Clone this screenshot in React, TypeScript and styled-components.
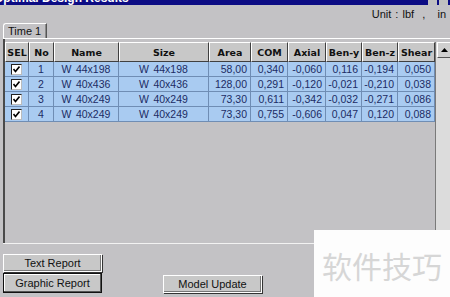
import { styled, createGlobalStyle } from "styled-components";

const GlobalStyle = createGlobalStyle`
  html, body {
    margin: 0;
    padding: 0;
    background: #c3c2c5;
  }
  body {
    font-family: "Liberation Sans", Arial, sans-serif;
    overflow: hidden;
  }
`;

interface IRow {
  no: number;
  name: string;
  size: string;
  area: string;
  com: string;
  axial: string;
  beny: string;
  benz: string;
  shear: string;
}

const rows: IRow[] = [
  { no: 1, name: "W 44x198", size: "W 44x198", area: "58,00", com: "0,340", axial: "-0,060", beny: "0,116", benz: "-0,194", shear: "0,050" },
  { no: 2, name: "W 40x436", size: "W 40x436", area: "128,00", com: "0,291", axial: "-0,120", beny: "-0,021", benz: "-0,210", shear: "0,038" },
  { no: 3, name: "W 40x249", size: "W 40x249", area: "73,30", com: "0,611", axial: "-0,342", beny: "-0,032", benz: "-0,271", shear: "0,086" },
  { no: 4, name: "W 40x249", size: "W 40x249", area: "73,30", com: "0,755", axial: "-0,606", beny: "0,047", benz: "0,120", shear: "0,088" },
];

const columns = "24px 25px 65px 90px 42px 37px 38px 36px 36px 37px";

const Window = styled.div`
  width: 450px;
  height: 297px;
  display: flex;
  flex-direction: column;
  position: relative;
  overflow: hidden;
`;

const TitleBar = styled.div`
  height: 5px;
  background: #0c0c84;
  overflow: hidden;
  display: flex;
  justify-content: space-between;
`;

const TitleText = styled.span`
  color: #fff;
  font-weight: bold;
  font-size: 12px;
  line-height: 12px;
  margin-top: -8px;
  margin-left: -6px;
`;

const TitleButtons = styled.div`
  display: flex;
  gap: 2px;
  padding-right: 2px;
`;

const TitleButton = styled.div`
  width: 9px;
  background: #c0c0c0;
`;

const UnitBar = styled.div`
  height: 17px;
  display: flex;
  align-items: center;
  justify-content: flex-end;
  padding-right: 4px;
  font-size: 11px;
  color: #111;
  word-spacing: 1px;
`;

const TabStrip = styled.div`
  height: 16px;
  padding-left: 3px;
  display: flex;
  align-items: flex-end;
`;

const Tab = styled.div`
  width: 44px;
  height: 15px;
  border: 1px solid #fff;
  border-bottom: none;
  border-right-color: #555;
  border-top-left-radius: 3px;
  box-shadow: inset -1px 0 0 #8a8a8a;
  font-size: 11px;
  line-height: 15px;
  padding-left: 4px;
  color: #111;
  box-sizing: border-box;
`;

const Panel = styled.div`
  height: 206px;
  margin-left: 3px;
  border-top: 1px solid #fff;
  border-bottom: 1px solid #f2f2f2;
  display: flex;
  box-sizing: border-box;
`;

const GridFrame = styled.div`
  flex: 1;
  display: flex;
  border-left: 2px solid #4a4a4a;
  padding-top: 3px;
`;

const Grid = styled.div`
  width: 430px;
  display: flex;
  flex-direction: column;
`;

const HeaderRow = styled.div`
  display: grid;
  grid-template-columns: ${columns};
  height: 20px;
`;

const HeaderCell = styled.div`
  background: #c8c8c8;
  border-top: 1px solid #fff;
  border-left: 1px solid #fff;
  border-right: 1px solid #404040;
  border-bottom: 1px solid #404040;
  box-sizing: border-box;
  font-family: "DejaVu Sans", sans-serif;
  font-weight: bold;
  font-size: 9.5px;
  color: #111;
  display: flex;
  align-items: center;
  justify-content: center;
  white-space: nowrap;
  overflow: hidden;
`;

const DataRow = styled.div`
  display: grid;
  grid-template-columns: ${columns};
  height: 15px;
`;

const DataCell = styled.div<{ $align?: string; $wide?: boolean }>`
  background: #a9cbf1;
  border-right: 1px solid #6f8db4;
  border-bottom: 1px solid #6f8db4;
  box-sizing: border-box;
  font-size: 10.5px;
  color: #1c2c64;
  display: flex;
  align-items: center;
  justify-content: ${(p) => p.$align || "flex-end"};
  padding: 0 3px;
  white-space: nowrap;
  overflow: hidden;
  word-spacing: ${(p) => (p.$wide ? "1.5px" : "0")};
`;

const CheckBox = styled.div`
  width: 9px;
  height: 9px;
  background: #fff;
  border: 1px solid #222;
  border-right-color: #bbb;
  border-bottom-color: #bbb;
  display: flex;
  align-items: center;
  justify-content: center;
`;

const ScrollBar = styled.div`
  width: 15px;
  display: flex;
  flex-direction: column;
  background: #dcdcdc;
  border-left: 1px solid #7a7a7a;
  margin-bottom: 3px;
`;

const ScrollArrow = styled.div`
  height: 14px;
  margin: 0 1px;
  background: #cfcfcf;
  border-top: 1px solid #fff;
  border-left: 1px solid #fff;
  border-bottom: 1px solid #555;
  display: flex;
  align-items: center;
  justify-content: center;
`;

const Footer = styled.div`
  flex: 1;
  display: flex;
  align-items: flex-end;
  padding: 0 0 4px 3px;
  gap: 61px;
`;

const ButtonColumn = styled.div`
  display: flex;
  flex-direction: column;
  gap: 1px;
`;

const Button = styled.div<{ $default?: boolean }>`
  width: 99px;
  height: ${(p) => (p.$default ? "20px" : "18px")};
  background: #c8c8c8;
  box-sizing: border-box;
  border: 1px solid ${(p) => (p.$default ? "#111" : "#fff")};
  box-shadow: ${(p) =>
    p.$default
      ? "inset -1px -1px 0 #555, inset 1px 1px 0 #fff"
      : "inset -1px -1px 0 #777, 1px 1px 0 #333"};
  font-size: 11px;
  color: #111;
  display: flex;
  align-items: center;
  justify-content: center;
`;

const Watermark = styled.div`
  position: absolute;
  left: 314px;
  top: 230px;
  width: 136px;
  height: 67px;
  background: #fdfdfd;
  color: #d6d6d6;
  font-family: "Noto Sans CJK SC", sans-serif;
  font-size: 30px;
  display: flex;
  align-items: center;
  justify-content: center;
  padding-top: 2px;
  box-sizing: border-box;
`;

function Check() {
  return (
    <svg width="7" height="7" viewBox="0 0 7 7">
      <path d="M0.5 3 L2.5 5.5 L6.5 0.5" stroke="#000" strokeWidth="1.6" fill="none" />
    </svg>
  );
}

const headers = ["SEL", "No", "Name", "Size", "Area", "COM", "Axial", "Ben-y", "Ben-z", "Shear"];

function App() {
  return (
    <Window>
      <GlobalStyle />
      <TitleBar>
        <TitleText>Optimal Design Results</TitleText>
        <TitleButtons>
          <TitleButton />
          <TitleButton />
        </TitleButtons>
      </TitleBar>
      <UnitBar>Unit : lbf &nbsp;, &nbsp; in</UnitBar>
      <TabStrip>
        <Tab>Time 1</Tab>
      </TabStrip>
      <Panel>
        <GridFrame>
          <Grid>
            <HeaderRow>
              {headers.map((h) => (
                <HeaderCell key={h}>{h}</HeaderCell>
              ))}
            </HeaderRow>
            {rows.map((r) => (
              <DataRow key={r.no}>
                <DataCell $align="center">
                  <CheckBox>
                    <Check />
                  </CheckBox>
                </DataCell>
                <DataCell $align="center">{r.no}</DataCell>
                <DataCell $align="center" $wide>{r.name}</DataCell>
                <DataCell $align="center" $wide>{r.size}</DataCell>
                <DataCell>{r.area}</DataCell>
                <DataCell>{r.com}</DataCell>
                <DataCell>{r.axial}</DataCell>
                <DataCell>{r.beny}</DataCell>
                <DataCell>{r.benz}</DataCell>
                <DataCell>{r.shear}</DataCell>
              </DataRow>
            ))}
          </Grid>
          <ScrollBar>
            <ScrollArrow>
              <svg width="7" height="4" viewBox="0 0 7 4">
                <path d="M3.5 0 L7 4 L0 4 Z" fill="#000" />
              </svg>
            </ScrollArrow>
          </ScrollBar>
        </GridFrame>
      </Panel>
      <Footer>
        <ButtonColumn>
          <Button>Text Report</Button>
          <Button $default>Graphic Report</Button>
        </ButtonColumn>
        <Button>Model Update</Button>
      </Footer>
      <Watermark>软件技巧</Watermark>
    </Window>
  );
}

export default App;
